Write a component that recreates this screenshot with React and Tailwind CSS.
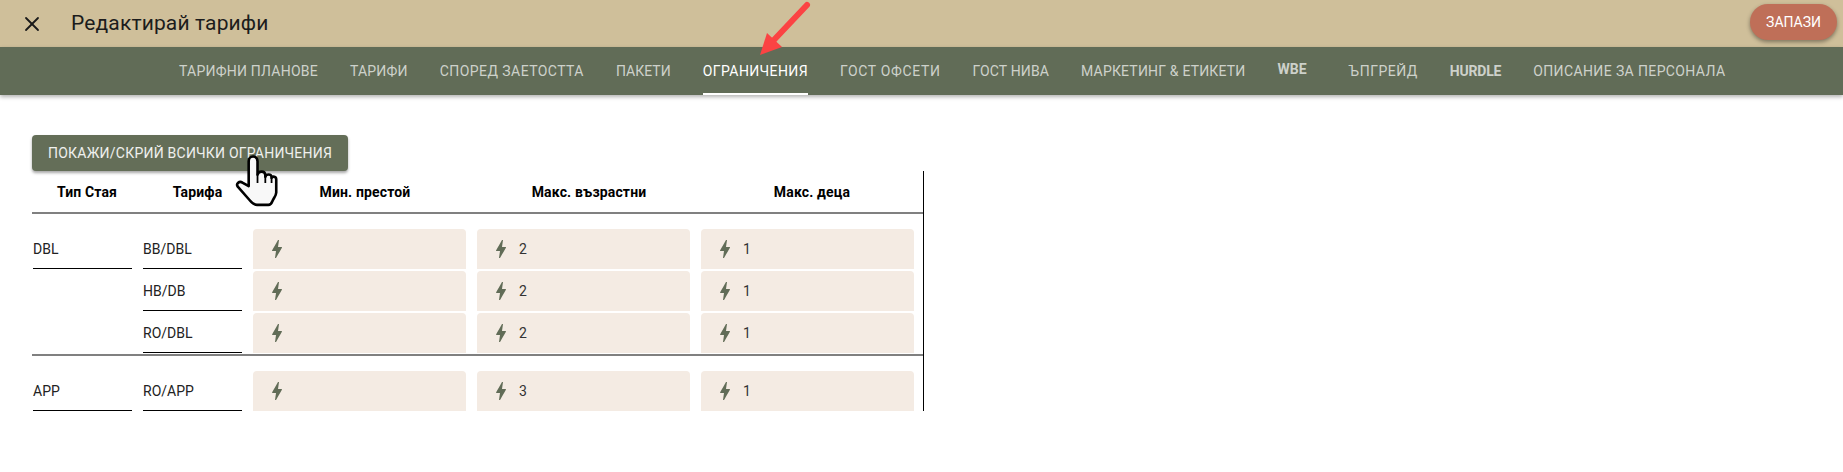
import React from "react";
import { X } from "lucide-react";

const tabs = [
  { label: "Тарифни планове", extra: "tracking-[0.23px]" },
  { label: "Тарифи", extra: "tracking-[0.2px]" },
  { label: "Според заетостта", extra: "tracking-[0.44px]" },
  { label: "Пакети", extra: "tracking-[0.05px]" },
  { label: "Ограничения", extra: "tracking-[0.42px]", active: true },
  { label: "Гост офсети", extra: "tracking-[0.64px]" },
  { label: "Гост нива", extra: "tracking-[0.14px]" },
  { label: "Маркетинг & етикети", extra: "tracking-[0.18px]" },
  { label: "WBE", extra: "font-bold pr-[26px] pb-[4px]" },
  { label: "Ъпгрейд", extra: "tracking-[0.5px]" },
  { label: "Hurdle", extra: "font-bold tracking-[-0.2px]" },
  { label: "Описание за персонала", extra: "tracking-[0.38px]" },
];

const groups = [
  {
    room: "DBL",
    rows: [
      { rate: "BB/DBL", stay: "", adults: "2", kids: "1" },
      { rate: "HB/DB", stay: "", adults: "2", kids: "1" },
      { rate: "RO/DBL", stay: "", adults: "2", kids: "1" },
    ],
  },
  {
    room: "APP",
    rows: [{ rate: "RO/APP", stay: "", adults: "3", kids: "1" }],
  },
];

const Bolt = () => (
  <svg viewBox="0 0 24 24" className="w-6 h-6 shrink-0 fill-[#616c57]">
    <path d="M11 21h-1l1-7H7.5c-.58 0-.57-.32-.38-.66.19-.34.05-.08.07-.12C8.48 10.94 10.42 7.54 13 3h1l-1 7h3.5c.49 0 .56.33.47.51l-.07.15C12.96 17.55 11 21 11 21z" />
  </svg>
);

const Cell = ({ value }) => (
  <div className="h-10 w-[213px] bg-[#f4ebe3] rounded-t-[4px] flex items-center gap-[6px] pl-3 text-[#333333]">
    <Bolt />
    <span>{value}</span>
  </div>
);

const Label = ({ text, underline }) => (
  <div className={`h-10 w-[99px] ml-px flex items-center ${underline ? "border-b border-black" : ""}`}>
    {text}
  </div>
);

const Hand = () => (
  <svg viewBox="0 0 42 50" className="absolute left-[235px] top-[155px] w-[44px] h-[52px]">
    <path
      d="M13 30V6c0-6 8.500-6 8.500 0v13c1-4 7-4 7.500 0v2c1-3 5.500-3 6 0v1c1-2 4.500-1.500 4.500 1.500V36c0 3-2.500 5.500-3.500 8-.8 2-1.500 4-4 4H21c-3 0-5-2-7-4.500L2.500 30.500c-2-3 1.500-6 4.500-4z"
      fill="#f8f8f8"
      stroke="#000"
      strokeWidth="2.500"
      strokeLinejoin="round"
    />
    <path d="M21.500 18v9M29 20v7M35 21v6" fill="none" stroke="#000" strokeWidth="1.700" />
  </svg>
);

const Arrow = () => (
  <svg viewBox="0 0 60 60" className="absolute left-[755px] top-0 w-[60px] h-[60px]">
    <path d="M52 5L17 42" stroke="#fb4343" strokeWidth="6" strokeLinecap="round" />
    <path d="M5 55L12 33L27 47z" fill="#fb4343" />
  </svg>
);

const App = () => {
  return (
    <div className="relative min-h-screen bg-white font-['Roboto',sans-serif] text-sm overflow-hidden">
      <div className="h-[47px] bg-[#cfbf9a] flex items-center justify-between pl-[26px] pr-[6px]">
        <div className="flex items-center">
          <X className="w-6 h-6 text-[#1a1a1a] -ml-[6px]" strokeWidth={1.800} />
          <span className="ml-[27px] -mt-[2px] text-[21px] tracking-[0.14px] text-[#1c1c1c]">Редактирай тарифи</span>
        </div>
        <button className="h-9 w-[87px] -mt-[3px] rounded-full bg-[#bf6f58] text-white uppercase shadow-[0_2px_4px_rgba(0,0,0,0.4)]">
          Запази
        </button>
      </div>

      <div className="relative h-12 bg-[#616c57] flex pl-[163px] shadow-[0_2px_4px_rgba(0,0,0,0.3)]">
        {tabs.map((tab) => (
          <div
            key={tab.label}
            className={`h-full px-4 flex items-center uppercase ${tab.active ? "text-white" : "text-white/70"} ${tab.extra}`}
          >
            <span className={`h-full flex items-center ${tab.active ? "border-b-2 border-white pt-[2px]" : ""}`}>
              {tab.label}
            </span>
          </div>
        ))}
      </div>

      <div className="pl-8 pt-10">
        <button className="h-9 px-4 rounded-[4px] bg-[#646e58] text-white/90 uppercase tracking-[0.23px] shadow-[0_2px_3px_rgba(0,0,0,0.35)] block">
          Покажи/скрий всички ограничения
        </button>

        <div className="w-[892px] border-r border-black">
          <div className="grid grid-cols-[110px_111px_224px_224px_222px] h-[43px] items-center border-b-2 border-[#808080] font-bold text-black text-center tracking-[0.15px]">
            <div>Тип Стая</div>
            <div>Тарифа</div>
            <div>Мин. престой</div>
            <div>Макс. възрастни</div>
            <div>Макс. деца</div>
          </div>

          {groups.map((group, g) => (
            <div
              key={group.room}
              className={`flex flex-col gap-[2px] pt-[15px] ${g < groups.length - 1 ? "pb-px border-b-2 border-[#808080]" : ""}`}
            >
              {group.rows.map((row, i) => (
                <div key={row.rate} className="grid grid-cols-[110px_111px_224px_224px_222px] text-[#222222]">
                  <Label text={i === 0 ? group.room : ""} underline={i === 0} />
                  <Label text={row.rate} underline />
                  <Cell value={row.stay} />
                  <Cell value={row.adults} />
                  <Cell value={row.kids} />
                </div>
              ))}
            </div>
          ))}
        </div>
      </div>

      <Arrow />
      <Hand />
    </div>
  );
};

export default App;
